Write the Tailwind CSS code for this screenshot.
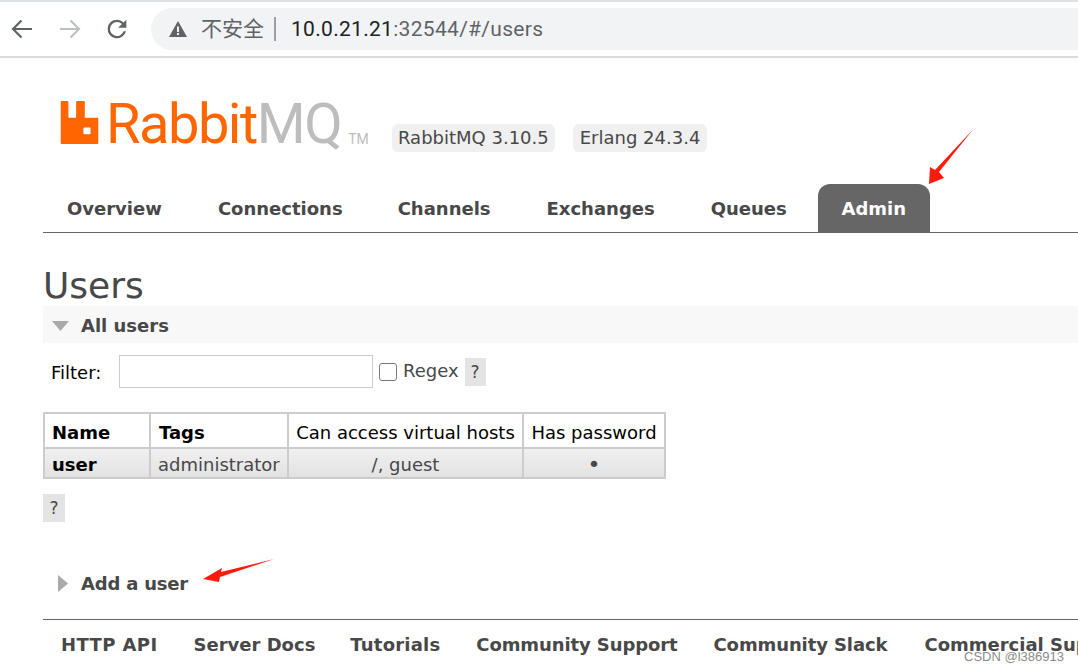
<!DOCTYPE html>
<html><head><meta charset="utf-8">
<script src="https://cdn.jsdelivr.net/npm/@tailwindcss/browser@4"></script>
</head>
<body class="bg-white">
<div class="relative w-[1078px] h-[671px] overflow-hidden bg-white font-['DejaVu_Sans','Noto_Sans_CJK_SC',sans-serif] text-[#484848]">
  <!-- browser bar -->
  <div class="h-[58px] border-t-2 border-b-2 border-t-[#dee1e6] border-b-[#dcdcdc] flex items-center pl-[10px]">
    <svg class="w-6 h-6" viewBox="0 0 24 24" fill="none" stroke="#5f6368" stroke-width="2.200"><path d="M22 12H3.500M11.500 3.500l-8.500 8.500 8.500 8.500"/></svg>
    <svg class="w-6 h-6 ml-[24px]" viewBox="0 0 24 24" fill="none" stroke="#bdc1c6" stroke-width="2.200"><path d="M2 12H20.500M12.500 3.500l8.500 8.500-8.500 8.500"/></svg>
    <svg class="w-[28px] h-[28px] ml-[21px]" viewBox="0 0 24 24" fill="#5f6368"><path d="M17.650 6.350A7.960 7.960 0 0 0 12 4a8 8 0 1 0 7.730 10h-2.080A6 6 0 1 1 12 6c1.660 0 3.140.69 4.220 1.780L13 11h7V4l-2.350 2.350z"/></svg>
    <div class="ml-[20px] h-[42px] flex-1 rounded-l-full bg-[#f1f3f4] flex items-center pl-[17px] text-[21px] font-['Roboto','Noto_Sans_CJK_SC',sans-serif]">
      <svg class="w-[20px] h-[20px]" viewBox="0 0 20 20" fill="#5f6368"><path d="M10 2 L19 18 H1 Z"/><rect x="9" y="7.500" width="2" height="5.500" fill="#f1f3f4"/><rect x="9" y="14" width="2" height="2" fill="#f1f3f4"/></svg>
      <span class="ml-[13px] pt-[2px] text-[#5f6368]">不安全</span>
      <span class="ml-[10px] w-[2px] h-[24px] bg-[#9aa0a6]"></span>
      <span class="ml-[15px] pt-[2px] text-[#202124] tracking-[0.3px]">10.0.21.21<span class="text-[#5f6368]">:32544/#/users</span></span>
    </div>
  </div>

  <!-- page -->
  <div class="pl-[43px]">
    <div class="h-[126px] relative">
      <div class="absolute left-[17px] top-[43px] flex items-start">
        <svg class="w-[39px] h-[43px]" viewBox="0 0 39 44.600" fill="#ff6600"><path fill-rule="evenodd" d="M1 0h6a1 1 0 0 1 1 1v16.500h8V1a1 1 0 0 1 1-1h7a1 1 0 0 1 1 1v16.500h13a1 1 0 0 1 1 1v25a1 1 0 0 1-1 1H1a1 1 0 0 1-1-1V1a1 1 0 0 1 1-1zM23.500 28.500v5a1 1 0 0 0 1 1h5.500a1 1 0 0 0 1-1v-5a1 1 0 0 0-1-1h-5.500a1 1 0 0 0-1 1z"/></svg>
        <span class="ml-[7px] -mt-[13px] text-[56px] leading-[72px] font-normal font-['Roboto',sans-serif] text-[#ff6600] tracking-[-1.5px]">Rabbit<span class="text-[#bdbdbd]">MQ</span></span>
        <span class="ml-[7px] mt-[31px] text-[14px] leading-[14px] text-[#bdbdbd] font-['Roboto',sans-serif]">TM</span>
      </div>
      <div class="absolute left-[349px] top-[66px] flex gap-[18px] text-[18px] leading-[28px]">
        <span class="bg-[#f0f0f0] rounded-[6px] px-[6px]">RabbitMQ 3.10.5</span>
        <span class="bg-[#f0f0f0] rounded-[6px] px-[7px]">Erlang 24.3.4</span>
      </div>
    </div>

    <!-- nav -->
    <nav class="h-[49px] border-b border-[#666] flex items-start pl-[24px] text-[18px] font-bold leading-[50px]">
      <a class="mr-[56px]">Overview</a>
      <a class="mr-[55px]">Connections</a>
      <a class="mr-[56px]">Channels</a>
      <a class="mr-[56px]">Exchanges</a>
      <a class="mr-[31px]">Queues</a>
      <a class="bg-[#666] text-white rounded-t-[12px] w-[112px] h-[48px] text-center">Admin</a>
    </nav>

    <h1 class="mt-[32px] text-[36px] leading-[41px] text-[#484848] font-['DejaVu_Sans',sans-serif]">Users</h1>

    <div class="h-[37px] bg-[#f8f8f8] flex items-center pl-[9px] pt-[2px] text-[18px] font-bold">
      <svg class="w-[17px] h-[10px]" viewBox="0 0 17 10" fill="#aaa"><path d="M0 0h17l-8.500 10z"/></svg>
      <span class="ml-[12px]">All users</span>
    </div>

    <div class="mt-[12px] flex items-center text-[18px] h-[33px]">
      <span class="ml-[8px] w-[52px] pt-[1px] text-black">Filter:</span>
      <div class="ml-[16px] w-[254px] h-[33px] border border-[#ccc] bg-white"></div>
      <div class="ml-[6px] w-[18px] h-[18px] border border-[#767676] rounded-[3px] bg-white"></div>
      <span class="ml-[6px] pb-[2px]">Regex</span>
      <span class="ml-[6px] w-[21px] h-[28px] bg-[#e4e4e4] text-center text-[17px] leading-[28px]">?</span>
    </div>

    <table class="mt-[24px] border-collapse border-2 border-[#ccc] text-[18px] w-[623px] table-fixed">
      <thead>
        <tr class="h-[35px] text-black">
          <th class="border-2 border-[#ccc] font-bold text-left pl-[7px] pt-[4px] w-[106px]">Name</th>
          <th class="border-2 border-[#ccc] font-bold text-left pl-[8px] pt-[4px] w-[138px]">Tags</th>
          <th class="border-2 border-[#ccc] font-normal text-center pt-[4px] w-[235px]">Can access virtual hosts</th>
          <th class="border-2 border-[#ccc] font-normal text-center pt-[4px]">Has password</th>
        </tr>
      </thead>
      <tbody>
        <tr class="h-[29px] leading-[25px] bg-gradient-to-b from-[#f1f1f1] to-[#e2e2e2]">
          <td class="border-2 border-[#ccc] font-bold text-left pl-[7px] pt-[3px] text-black">user</td>
          <td class="border-2 border-[#ccc] text-left pl-[7px] pt-[3px]">administrator</td>
          <td class="border-2 border-[#ccc] text-center pt-[3px]">/, guest</td>
          <td class="border-2 border-[#ccc] text-center text-[22px] pt-[3px]">•</td>
        </tr>
      </tbody>
    </table>

    <div class="mt-[15px] w-[22px] h-[28px] bg-[#e4e4e4] text-center text-[17px] leading-[28px]">?</div>

    <div class="mt-[46px] h-[30px] flex items-center pl-[15px] text-[18px] font-bold">
      <svg class="w-[10px] h-[17px]" viewBox="0 0 10 17" fill="#aaa"><path d="M0 0v17l10-8.500z"/></svg>
      <span class="ml-[13px] tracking-[-0.2px]">Add a user</span>
    </div>

    <footer class="mt-[21px] border-t border-[#666] pt-[10px] pl-[18px] flex whitespace-nowrap text-[18px] font-bold leading-[30px]">
      <a class="mr-[36px] tracking-[0.4px]">HTTP API</a>
      <a class="mr-[35px]">Server Docs</a>
      <a class="mr-[36px] tracking-[0.2px]">Tutorials</a>
      <a class="mr-[36px] tracking-[-0.1px]">Community Support</a>
      <a class="mr-[37px] tracking-[-0.1px]">Community Slack</a>
      <a>Commercial Support</a>
    </footer>
  </div>

  <!-- annotations -->
  <svg class="absolute left-0 top-0 w-[1078px] h-[671px] pointer-events-none" viewBox="0 0 1078 671" fill="#ff1a0d">
    <path d="M973 129.500 L939 172 L944 178 L929 184 L930 167 L935 170 Z"/>
    <path d="M274 559 L221 572 L222 568 L203 579 L219 582 L220 577 Z"/>
  </svg>
  <div class="absolute left-[964px] top-[649px] text-[13px] leading-[15px] text-[#8a8a8a] font-['Liberation_Sans',sans-serif]">CSDN @l386913</div>
</div>
</body></html>
